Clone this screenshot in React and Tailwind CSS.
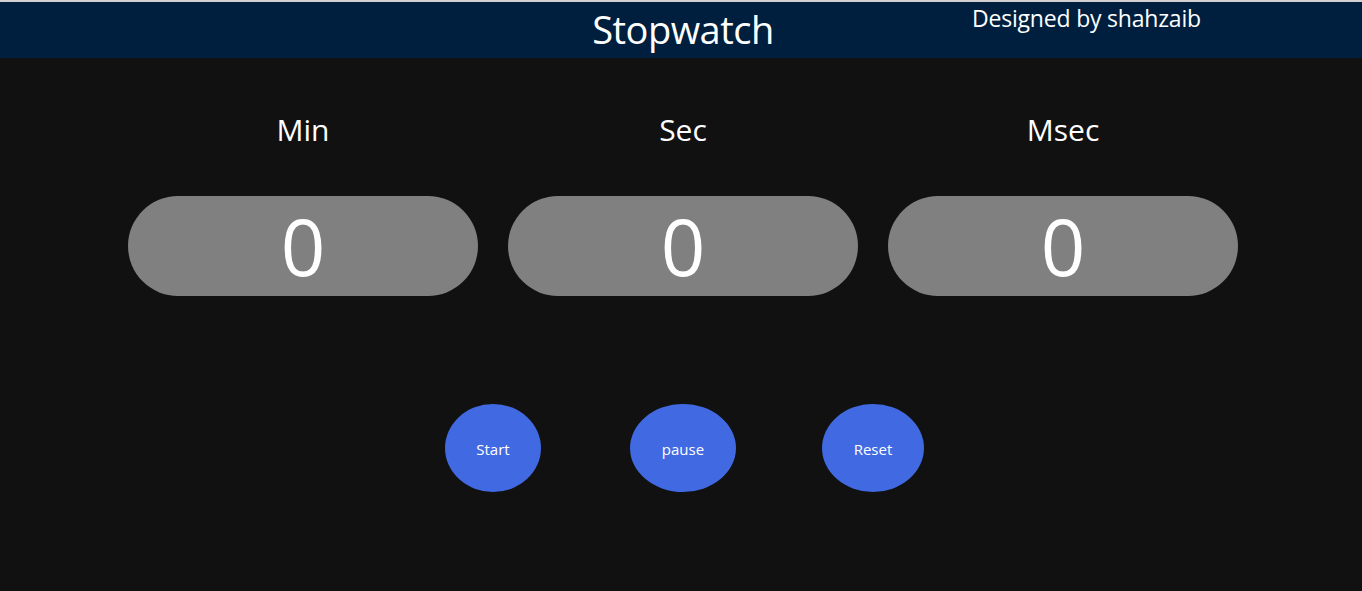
export default function App() {
  const font = { fontFamily: '"Open Sans", "Noto Sans", sans-serif' };
  const units = ["Min", "Sec", "Msec"];
  return (
    <div className="min-h-[591px] w-full bg-[#111111] text-white" style={font}>
      <div className="h-[2px] bg-[#d0d0d0]" />
      <header className="relative h-[56px] bg-[#001f3f]">
        <h1 className="pl-[4px] text-center text-[38px] leading-[55px] tracking-[-0.5px]">Stopwatch</h1>
        <div className="absolute left-[972px] top-[0px] text-[23px] leading-[32px] tracking-[-0.2px]">
          Designed by shahzaib
        </div>
      </header>
      <div className="ml-[128px] mt-[52px] flex gap-[30px]">
        {units.map((u) => (
          <div key={u} className="flex w-[350px] flex-col items-center">
            <div className="text-[30px] leading-[40px]">{u}</div>
            <div className="mt-[46px] flex h-[100px] w-[350px] items-center justify-center rounded-full bg-[#808080]">
              <span className="text-[78px] leading-none">0</span>
            </div>
          </div>
        ))}
      </div>
      <div className="ml-[398px] mt-[108px] flex">
        {["Start", "pause", "Reset"].map((b, i) => (
          <div key={b} className="flex w-[190px] justify-center">
            <button
              className={
                "flex h-[88px] items-center justify-center rounded-[50%] bg-[#4169e1] pt-[2px] text-[15px] text-white " +
                (i === 0 ? "w-[96px]" : i === 1 ? "w-[106px]" : "w-[102px]")
              }
            >
              {b}
            </button>
          </div>
        ))}
      </div>
    </div>
  );
}
